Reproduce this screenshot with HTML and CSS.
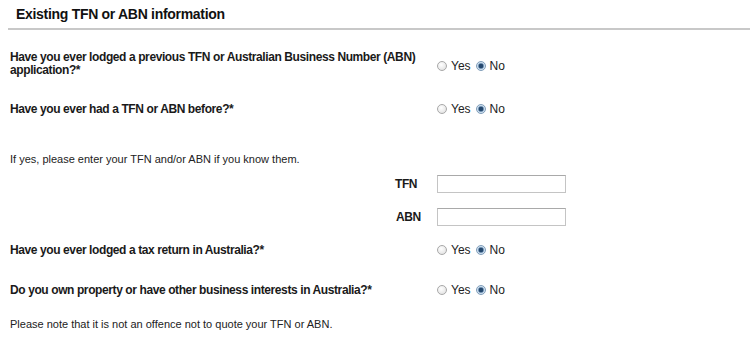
FILE: index.html
```html
<!DOCTYPE html>
<html lang="en">
<head>
  <meta charset="UTF-8" />
  <title>Existing TFN or ABN information</title>
  <link rel="stylesheet" href="styles.css">
</head>
<body>
  <div class="section-head">Existing TFN or ABN information</div>
  <div class="form">
    <div class="row q1">
      <label class="question">Have you ever lodged a previous TFN or Australian Business Number (ABN) application?*</label>
      <div class="choices">
        <label><input type="radio" name="prevApp"> Yes</label>
        <label><input type="radio" name="prevApp" checked> No</label>
      </div>
    </div>
    <div class="row q2">
      <label class="question">Have you ever had a TFN or ABN before?*</label>
      <div class="choices">
        <label><input type="radio" name="hadTfn"> Yes</label>
        <label><input type="radio" name="hadTfn" checked> No</label>
      </div>
    </div>
    <p class="hint">If yes, please enter your TFN and/or ABN if you know them.</p>
    <div class="row field tfn">
      <label class="field-label">TFN</label>
      <input type="text" class="text-input">
    </div>
    <div class="row field abn">
      <label class="field-label">ABN</label>
      <input type="text" class="text-input">
    </div>
    <div class="row q3">
      <label class="question">Have you ever lodged a tax return in Australia?*</label>
      <div class="choices">
        <label><input type="radio" name="taxReturn"> Yes</label>
        <label><input type="radio" name="taxReturn" checked> No</label>
      </div>
    </div>
    <div class="row q4">
      <label class="question">Do you own property or have other business interests in Australia?*</label>
      <div class="choices">
        <label><input type="radio" name="property"> Yes</label>
        <label><input type="radio" name="property" checked> No</label>
      </div>
    </div>
    <p class="hint note">Please note that it is not an offence not to quote your TFN or ABN.</p>
  </div>
</body>
</html>
```

FILE: styles.css
```css
* { box-sizing: border-box; }
body {
  margin: 0;
  font-family: 'Liberation Sans', Arial, sans-serif;
  color: #1a1a1a;
  background: #fff;
}
.section-head {
  margin: 0 0 0 8px;
  padding: 6px 0 0 8px;
  height: 30px;
  font-size: 14px; font-weight: bold;
  letter-spacing: -0.3px;
  border-bottom: 2px solid #c8c8c8;
  color: #111;
}
.form { padding: 0 0 0 10px; }
.row {
  display: grid;
  grid-template-columns: 427px auto;
  align-items: center;
}
.question {
  font-size: 12px; font-weight: bold;
  line-height: 13px; letter-spacing: -0.4px;
  padding-right: 10px;
}
.choices { display: flex; gap: 5px; font-size: 12px; color: #222; }
.choices label { display: flex; align-items: center; gap: 4px; }
.q1 .choices { padding-top: 4px; }
input[type="radio"] {
  appearance: none; -webkit-appearance: none;
  width: 10px; height: 10px; margin: 0;
  border-radius: 50%;
  border: 1px solid #a8a8a8;
  background: radial-gradient(circle at 40% 35%, #fff, #dcdcdc);
}
input[type="radio"]:checked {
  border-color: #7f9db9;
  background: radial-gradient(circle, #24486e 0 2px, #6e8fb0 2.5px, #cfe0f0 3.5px);
}
.q1 { margin-top: 21px; }
.q2 { margin-top: 25px; }
.hint { margin: 37px 0 0; font-size: 11px; line-height: 13px; color: #222; }
.field { grid-template-columns: 385px 42px 129px; }
.field-label {
  grid-column: 2;
  font-size: 12px; font-weight: bold; letter-spacing: -0.4px;
}
.text-input {
  grid-column: 3;
  width: 129px; height: 18px;
  border: 1px solid #c4c4c4; border-top-color: #a9a9a9;
  padding: 0 3px;
}
.tfn { margin-top: 9px; }
.abn { margin-top: 15px; }
.abn .field-label { padding-left: 1px; }
.q3 { margin-top: 17px; }
.q4 { margin-top: 26px; }
.note { margin-top: 21px; }
```
